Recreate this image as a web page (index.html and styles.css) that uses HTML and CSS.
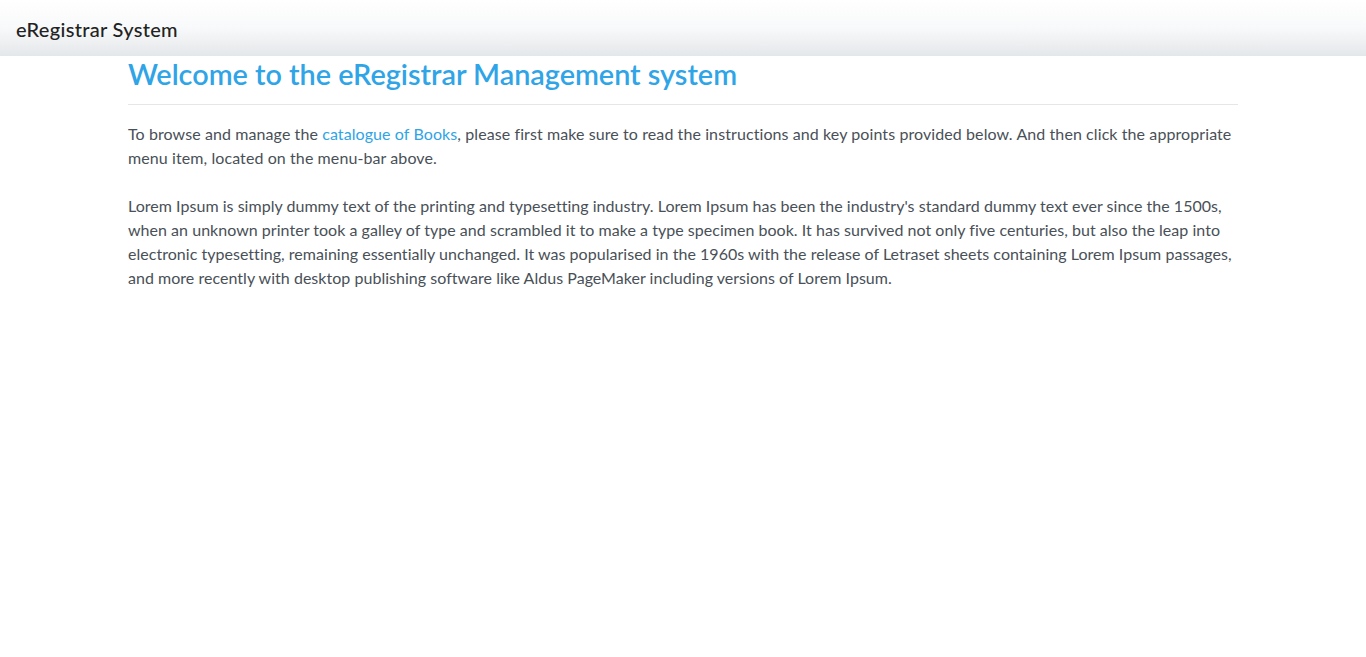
FILE: index.html
```html
<!DOCTYPE html>
<html lang="en">
<head>
<meta charset="utf-8">
<title>eRegistrar System</title>
<link rel="stylesheet" href="styles.css">
</head>
<body>
<nav class="navbar">
  <a class="brand" href="#">eRegistrar System</a>
</nav>
<main class="container">
  <h1 class="title">Welcome to the eRegistrar Management system</h1>
  <hr class="rule">
  <p class="intro">To browse and manage the <a class="link" href="#">catalogue of Books</a>, please first make sure to read the instructions and key points provided below. And then click the appropriate menu item, located on the menu-bar above.</p>
  <p class="body-text">Lorem Ipsum is simply dummy text of the printing and typesetting industry. Lorem Ipsum has been the industry's standard dummy text ever since the 1500s, when an unknown printer took a galley of type and scrambled it to make a type specimen book. It has survived not only five centuries, but also the leap into electronic typesetting, remaining essentially unchanged. It was popularised in the 1960s with the release of Letraset sheets containing Lorem Ipsum passages, and more recently with desktop publishing software like Aldus PageMaker including versions of Lorem Ipsum.</p>
</main>
</body>
</html>
```
FILE: styles.css
```css
* { box-sizing: border-box; }
html, body { margin: 0; padding: 0; }
body {
  font-family: "Lato", "Open Sans", sans-serif;
  font-size: 16px;
  line-height: 24px;
  letter-spacing: 0.09px;
  color: #495057;
  background: #fff;
}
.navbar {
  height: 56px;
  display: flex;
  align-items: center;
  padding: 2px 16px 0;
  background-image: linear-gradient(#ffffff, #f8f9fa 50%, #e4e7ea);
}
.brand {
  font-size: 20px;
  font-weight: 500;
  letter-spacing: 0.3px;
  color: #222;
  text-decoration: none;
  line-height: 30px;
}
.container {
  width: 1110px;
  margin: 0 auto;
}
.title {
  margin: 0;
  font-size: 28.8px;
  font-weight: 600;
  letter-spacing: 0;
  line-height: 36px;
  color: #2fa4e7;
  height: 32px;
}
.rule {
  margin: 16px 0 17px;
  border: 0;
  border-top: 1px solid #e5e6e8;
}
.intro { margin: 0 0 24px; }
.body-text { margin: 0; letter-spacing: 0.03px; }
.link { color: #2fa4e7; text-decoration: none; }
```
